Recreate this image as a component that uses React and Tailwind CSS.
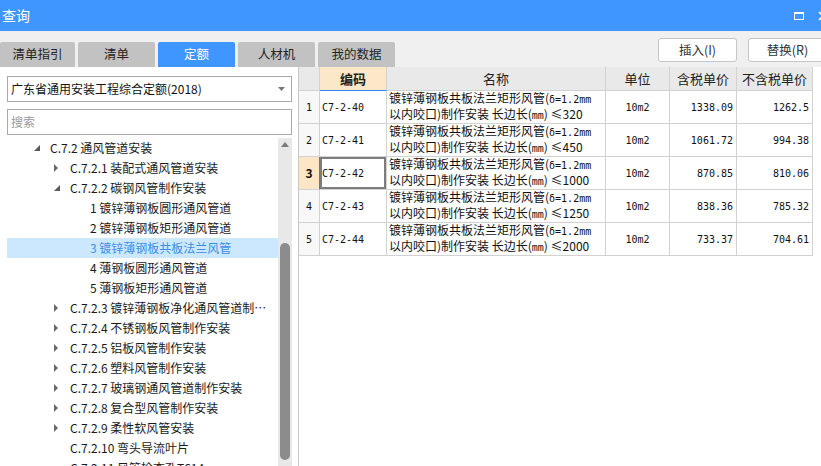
import React from 'react';

const tabs = [
    { label: '清单指引', w: 'w-[75px]' },
    { label: '清单', w: 'w-[77px]' },
    { label: '定额', w: 'w-[77px]', active: true },
    { label: '人材机', w: 'w-[77px]' },
    { label: '我的数据', w: 'w-[77px]' },
];

const tree = [
    { lvl: 0, icon: 'open', text: 'C.7.2 通风管道安装' },
    { lvl: 1, icon: 'closed', text: 'C.7.2.1 装配式通风管道安装' },
    { lvl: 1, icon: 'open', text: 'C.7.2.2 碳钢风管制作安装' },
    { lvl: 2, text: '1 镀锌薄钢板圆形通风管道' },
    { lvl: 2, text: '2 镀锌薄钢板矩形通风管道' },
    { lvl: 2, text: '3 镀锌薄钢板共板法兰风管', sel: true },
    { lvl: 2, text: '4 薄钢板圆形通风管道' },
    { lvl: 2, text: '5 薄钢板矩形通风管道' },
    { lvl: 1, icon: 'closed', text: 'C.7.2.3 镀锌薄钢板净化通风管道制作安装' },
    { lvl: 1, icon: 'closed', text: 'C.7.2.4 不锈钢板风管制作安装' },
    { lvl: 1, icon: 'closed', text: 'C.7.2.5 铝板风管制作安装' },
    { lvl: 1, icon: 'closed', text: 'C.7.2.6 塑料风管制作安装' },
    { lvl: 1, icon: 'closed', text: 'C.7.2.7 玻璃钢通风管道制作安装' },
    { lvl: 1, icon: 'closed', text: 'C.7.2.8 复合型风管制作安装' },
    { lvl: 1, icon: 'closed', text: 'C.7.2.9 柔性软风管安装' },
    { lvl: 1, text: 'C.7.2.10 弯头导流叶片' },
    { lvl: 1, text: 'C.7.2.11 风管检查孔T614' },
];

const rows = [
    { n: 1, code: 'C7-2-40', lim: '320', tax: '1338.09', notax: '1262.5' },
    { n: 2, code: 'C7-2-41', lim: '450', tax: '1061.72', notax: '994.38' },
    { n: 3, code: 'C7-2-42', lim: '1000', tax: '870.85', notax: '810.06', sel: true },
    { n: 4, code: 'C7-2-43', lim: '1250', tax: '838.36', notax: '785.32' },
    { n: 5, code: 'C7-2-44', lim: '2000', tax: '733.37', notax: '704.61' },
];

const M = ({ children }) => (
    <span className="font-['DejaVu_Sans_Mono',monospace] text-[10px]">{children}</span>
);

const TreeIcon = ({ type }) => {
    if (type === 'open') {
        return (
            <svg width="6" height="6" viewBox="0 0 6 6">
                <polygon points="6,0 6,6 0,6" fill="#5a5a5a" />
            </svg>
        );
    }
    if (type === 'closed') {
        return (
            <svg width="4" height="8" viewBox="0 0 4 8">
                <polygon points="0,0 4,4 0,8" fill="#6a6a6a" />
            </svg>
        );
    }
    return null;
};

const App = () => {
    return (
        <div className="w-[821px] h-[466px] overflow-hidden bg-[#f0f0f0] font-['Noto_Sans_CJK_SC','Noto_Sans',sans-serif] text-[#222]">
            {/* 标题栏 */}
            <div className="h-[31px] bg-[#4096ff] flex items-center justify-between overflow-hidden">
                <span className="pl-[2px] text-[14px] text-white">查询</span>
                <div className="flex items-center gap-[14px] mr-[-7px] shrink-0">
                    <div className="w-[10px] h-[8px] border-white border-[1.5px] border-t-[2.5px]"></div>
                    <svg width="10" height="10" viewBox="0 0 10 10">
                        <path d="M1 1L9 9M9 1L1 9" stroke="white" strokeWidth="1.6" />
                    </svg>
                </div>
            </div>

            {/* 页签 + 按钮 */}
            <div className="h-[36px] flex justify-between overflow-hidden">
                <div className="flex gap-[3px] self-end shrink-0">
                    {tabs.map((t) => (
                        <div
                            key={t.label}
                            className={`${t.w} h-[25px] rounded-t-[2px] flex items-center justify-center text-[12.5px] ${t.active ? 'bg-[#4096ff] text-white' : 'bg-[#c2c2c2] text-[#222]'}`}
                        >
                            {t.label}
                        </div>
                    ))}
                </div>
                <div className="flex gap-[11px] mt-[7px] mr-[-6px] shrink-0">
                    {['插入(I)', '替换(R)'].map((b) => (
                        <div key={b} className="w-[79px] h-[24px] bg-white border border-[#c6c6c6] rounded-[3px] flex items-center justify-center text-[12.5px] text-[#333]">
                            {b}
                        </div>
                    ))}
                </div>
            </div>

            {/* 主体 */}
            <div className="h-[399px] flex">
                {/* 左侧树 */}
                <div className="w-[299px] bg-white border-r border-[#c8c8c8] flex flex-col pl-[7px] pr-[6px] pt-[9px]">
                    <div className="h-[26px] border border-[#a9a9a9] flex items-center justify-between pl-[3px] pr-[6px] text-[12px] text-[#111]">
                        <span>广东省通用安装工程综合定额(2018)</span>
                        <svg width="7" height="4" viewBox="0 0 7 4">
                            <polygon points="0,0 7,0 3.5,4" fill="#777" />
                        </svg>
                    </div>
                    <div className="h-[26px] mt-[7px] border border-[#a9a9a9] flex items-center pl-[3px] text-[12px] text-[#9a9a9a]">
                        搜索
                    </div>
                    <div className="flex-1 flex mt-[3px] min-h-0">
                        <div className="flex-1 min-w-0 overflow-hidden">
                            {tree.map((item, i) => (
                                <div
                                    key={i}
                                    className={`h-[20px] flex items-center text-[12px] ${item.sel ? 'bg-[#cce8ff] text-[#3a8ee6]' : 'text-[#1a1a1a]'} ${item.lvl === 0 ? 'pl-[23px]' : item.lvl === 1 ? 'pl-[43px]' : 'pl-[63px]'}`}
                                >
                                    <div className="w-[20px] shrink-0 flex items-center pl-[4px]">
                                        <TreeIcon type={item.icon} />
                                    </div>
                                    <span className="truncate pr-[7px]">{item.text}</span>
                                </div>
                            ))}
                        </div>
                        <div className="w-[14px] bg-[#e8e8e8] flex flex-col items-center pt-[4px]">
                            <svg width="8" height="5" viewBox="0 0 8 5">
                                <polygon points="4,0 8,5 0,5" fill="#7a7a7a" />
                            </svg>
                            <div className="w-[10px] h-[217px] mt-[96px] rounded-full bg-[#8c8c8c]"></div>
                        </div>
                    </div>
                </div>

                {/* 右侧表格 */}
                <div className="flex-1 bg-white">
                    <div className="flex h-[24px] text-[13px] text-[#222]">
                        <div className="w-[21px] bg-[#e9e9e9] border-r border-b border-[#d2d2d2]"></div>
                        <div className="w-[67px] bg-[#fde7c9] border-r border-[#d2d2d2] border-b border-b-[#2b84f0] flex items-center justify-center font-bold">编码</div>
                        <div className="w-[219px] bg-[#e9e9e9] border-r border-b border-[#d2d2d2] flex items-center justify-center">名称</div>
                        <div className="w-[64px] bg-[#e9e9e9] border-r border-b border-[#d2d2d2] flex items-center justify-center">单位</div>
                        <div className="w-[67px] bg-[#e9e9e9] border-r border-b border-[#d2d2d2] flex items-center justify-center">含税单价</div>
                        <div className="w-[76px] bg-[#e9e9e9] border-r border-b border-[#d2d2d2] flex items-center justify-center">不含税单价</div>
                    </div>
                    {rows.map((r) => (
                        <div key={r.n} className="flex h-[33px] text-[#111]">
                            <div className={`w-[21px] border-r border-b border-[#d2d2d2] flex items-center justify-center ${r.sel ? 'bg-[#fde6c6] border-r-[#2b84f0] font-bold text-[12px]' : 'bg-[#f8f8f8]'}`}>
                                {r.sel ? r.n : <M>{r.n}</M>}
                            </div>
                            <div className={`w-[67px] border-r border-b border-[#d2d2d2] flex items-center pl-[2px] ${r.sel ? 'shadow-[inset_0_0_0_2px_#7d7d7d]' : ''}`}>
                                <M>{r.code}</M>
                            </div>
                            <div className="w-[219px] border-r border-b border-[#d2d2d2] flex flex-col justify-center pl-[2px] text-[12px] leading-[14px] whitespace-nowrap overflow-hidden">
                                <div>镀锌薄钢板共板法兰矩形风管(<M>δ=1.2mm</M></div>
                                <div>以内咬口)制作安装 长边长(<M>mm</M>) ≤{r.lim}</div>
                            </div>
                            <div className="w-[64px] border-r border-b border-[#d2d2d2] flex items-center justify-center">
                                <M>10m2</M>
                            </div>
                            <div className="w-[67px] border-r border-b border-[#d2d2d2] flex items-center justify-end pr-[3px]">
                                <M>{r.tax}</M>
                            </div>
                            <div className="w-[76px] border-r border-b border-[#d2d2d2] flex items-center justify-end pr-[3px]">
                                <M>{r.notax}</M>
                            </div>
                        </div>
                    ))}
                </div>
            </div>
        </div>
    );
};

export default App;
